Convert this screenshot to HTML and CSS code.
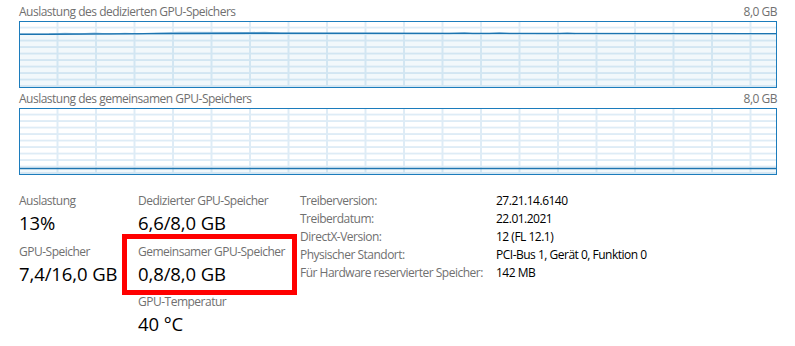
FILE: index.html
```html
<!DOCTYPE html>
<html lang="de">
<head>
  <meta charset="UTF-8">
  <title>GPU</title>
  <link rel="stylesheet" href="styles.css">
</head>
<body>
  <div class="page">
    <div class="graph">
      <div class="graph-head">
        <span>Auslastung des dedizierten GPU-Speichers</span>
        <span>8,0 GB</span>
      </div>
      <div class="chart">
        <svg viewBox="0 0 757 65" preserveAspectRatio="none">
          <polygon class="area" points="0,12 757,12 757,65 0,65"/>
          <polyline class="wave" points="29,12 45,11.3 60,11.8 75,11.2 90,12 105,11.4 118,11.9 135,11 160,10.4 230,10.6 245,10.3 260,11.2 430,11.6 445,10.6 453,11.6 470,11.6 480,10.6 490,11.6 540,11.6 548,10.8 556,11.6"/>
          <polyline class="line" points="0,12.3 30,12.3 130,11.6 250,11.2 757,11.6"/>
        </svg>
      </div>
    </div>

    <div class="graph">
      <div class="graph-head">
        <span>Auslastung des gemeinsamen GPU-Speichers</span>
        <span>8,0 GB</span>
      </div>
      <div class="chart">
        <svg viewBox="0 0 757 65" preserveAspectRatio="none">
          <polygon class="area" points="0,59.5 757,59.5 757,65 0,65"/>
          <polyline class="line" points="0,59.5 757,59.5"/>
        </svg>
      </div>
    </div>

    <div class="stats">
      <div class="col col-1">
        <div class="stat">
          <div class="label">Auslastung</div>
          <div class="value">13%</div>
        </div>
        <div class="stat">
          <div class="label">GPU-Speicher</div>
          <div class="value">7,4/16,0 GB</div>
        </div>
      </div>
      <div class="col col-2">
        <div class="stat">
          <div class="label">Dedizierter GPU-Speicher</div>
          <div class="value">6,6/8,0 GB</div>
        </div>
        <div class="stat marked">
          <div class="label">Gemeinsamer GPU-Speicher</div>
          <div class="value">0,8/8,0 GB</div>
        </div>
        <div class="stat">
          <div class="label">GPU-Temperatur</div>
          <div class="value">40 °C</div>
        </div>
      </div>
      <div class="info">
        <span class="key">Treiberversion:</span><span>27.21.14.6140</span>
        <span class="key">Treiberdatum:</span><span>22.01.2021</span>
        <span class="key">DirectX-Version:</span><span>12 (FL 12.1)</span>
        <span class="key">Physischer Standort:</span><span>PCI-Bus 1, Gerät 0, Funktion 0</span>
        <span class="key">Für Hardware reservierter Speicher:</span><span>142 MB</span>
      </div>
    </div>
  </div>
</body>
</html>
```

FILE: styles.css
```css
html, body{
  margin: 0;
  background: #fff;
}
body{
  font-family: "Segoe UI", "Open Sans", sans-serif;
  font-size: 12px;
  line-height: 16px;
  letter-spacing: -0.5px;
  color: #000;
}
.page{
  padding: 4px 18px 0 19px;
}
.graph{
  margin-bottom: 3px;
}
.graph-head{
  display: flex;
  justify-content: space-between;
  color: #707070;
  margin-bottom: 1px;
}
.chart{
  height: 65px;
  border: 1px solid #1c7cbc;
  background-color: #fff;
  background-image:
    linear-gradient(to right, transparent calc(100% - 1.5px), #deecf6 0),
    linear-gradient(to bottom, transparent calc(100% - 1.5px), #deecf6 0);
  background-size: 38.5px 100%, 100% 10%;
}
.chart svg{
  display: block;
  width: 100%;
  height: 100%;
}
.area{
  fill: rgba(17, 125, 187, 0.055);
}
.line{
  fill: none;
  stroke: #1c74b0;
  stroke-width: 1.4;
  vector-effect: non-scaling-stroke;
}
.wave{
  fill: none;
  stroke: #9cc4e1;
  stroke-width: 1.2;
  vector-effect: non-scaling-stroke;
}

.stats{
  display: flex;
  margin-top: 18px;
}
.col{
  display: flex;
  flex-direction: column;
  gap: 8.5px;
}
.col-1{
  width: 119px;
}
.col-2{
  width: 162px;
}
.stat{
  position: relative;
}
.label{
  color: #707070;
}
.value{
  font-size: 18.5px;
  line-height: 24px;
  letter-spacing: -0.1px;
  margin-top: 2px;
}
.marked::after{
  content: "";
  position: absolute;
  left: -16px;
  top: -10px;
  width: 175px;
  height: 61px;
  border: 5px solid #f00;
  box-sizing: border-box;
}
.info{
  display: grid;
  grid-template-columns: 196px auto;
  grid-auto-rows: 18px;
  line-height: 18px;
  margin-top: -1px;
}
.info .key{
  color: #707070;
}
```
